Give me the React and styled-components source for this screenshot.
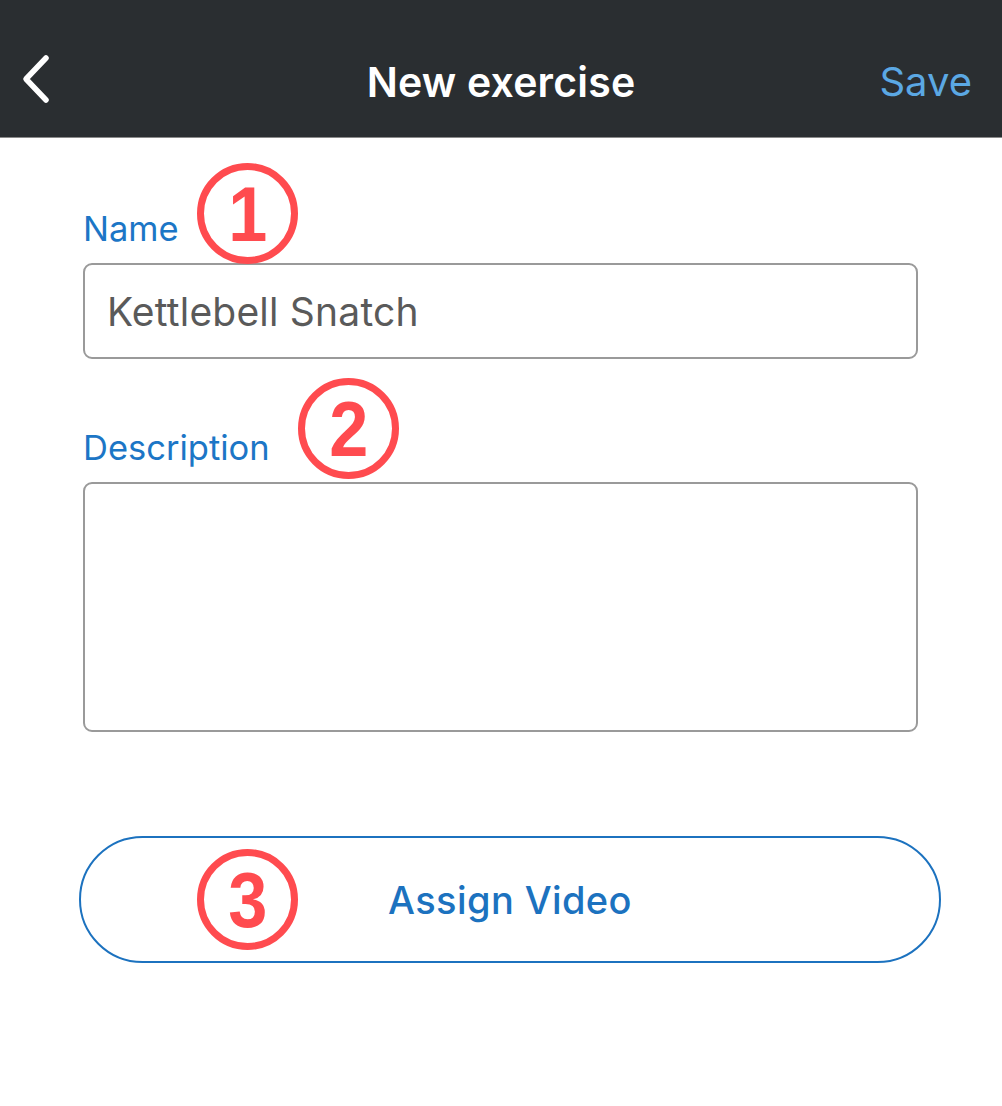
import React from 'react';
import styled, { createGlobalStyle } from 'styled-components';

const GlobalStyle = createGlobalStyle`
  html, body {
    margin: 0;
    padding: 0;
    background: #ffffff;
    font-family: 'Inter', 'Liberation Sans', Arial, sans-serif;
  }
`;

const Screen = styled.div`
  width: 1002px;
  height: 1106px;
  background: #ffffff;
  overflow: hidden;
`;

const NavBar = styled.header`
  height: 138px;
  background: #2a2e31;
  display: grid;
  grid-template-columns: 120px 1fr 120px;
  align-items: center;
  padding: 26px 30px 0 30px;
  box-sizing: border-box;
  border-bottom: 1px solid #8a8a8a;
`;

const BackButton = styled.button`
  background: none;
  border: 0;
  padding: 0;
  width: 34px;
  height: 50px;
  color: #ffffff;
  cursor: pointer;
  display: flex;
  align-items: center;
  margin: -6px 0 0 -10px;

  svg {
    width: 34px;
    height: 50px;
  }
`;

const Title = styled.h1`
  margin: 0;
  text-align: center;
  color: #ffffff;
  font-size: 41px;
  font-weight: 600;
  letter-spacing: 0.2px;
`;

const SaveButton = styled.button`
  background: none;
  border: 0;
  padding: 0;
  justify-self: end;
  color: #5ba8e4;
  font-family: inherit;
  font-size: 40px;
  font-weight: 400;
  cursor: pointer;
`;

const Form = styled.main`
  padding: 0 84px 0 83px;
  display: flex;
  flex-direction: column;
`;

const Field = styled.div`
  display: flex;
  flex-direction: column;
`;

const LabelRow = styled.div`
  position: relative;
  height: ${p => p.h}px;
  display: flex;
  align-items: flex-end;
`;

const Label = styled.label`
  color: #1c76c6;
  font-size: 34.5px;
  line-height: 1;
  padding-bottom: 17px;
`;

const Annotation = styled.span`
  position: absolute;
  left: ${p => p.x}px;
  top: ${p => p.y}px;
  width: 101px;
  height: 101px;
  box-sizing: border-box;
  border: 7px solid #ff4b4f;
  border-radius: 50%;
  display: flex;
  align-items: center;
  justify-content: center;
  color: #ff4b4f;
  font-family: 'Liberation Sans', Arial, sans-serif;
  font-weight: 700;
  font-size: 78px;
  line-height: 1;
  pointer-events: none;

  span {
    display: inline-block;
    transform: scaleX(0.9);
  }
`;

const Input = styled.div`
  height: 96px;
  box-sizing: border-box;
  border: 2px solid #9a9a9a;
  border-radius: 9px;
  display: flex;
  align-items: center;
  padding: 0 22px;
  color: #5a5a5a;
  font-size: 39px;
  letter-spacing: 0.2px;
`;

const TextArea = styled.div`
  height: 250px;
  box-sizing: border-box;
  border: 2px solid #9a9a9a;
  border-radius: 9px;
`;

const ButtonWrap = styled.div`
  position: relative;
  margin: 104px -23px 0 -4px;
`;

const PillButton = styled.button`
  width: 100%;
  height: 127px;
  box-sizing: border-box;
  border: 2px solid #1c72bf;
  border-radius: 64px;
  background: #ffffff;
  color: #1c72bf;
  font-family: inherit;
  font-size: 38px;
  font-weight: 500;
  letter-spacing: 0.4px;
  cursor: pointer;
`;

export default function App() {
  return (
    <Screen>
      <GlobalStyle />
      <NavBar>
        <BackButton aria-label="Back">
          <svg viewBox="0 0 34 50" fill="none">
            <path d="M26 4 L6 25 L26 46" stroke="currentColor" strokeWidth="5.5" strokeLinecap="round" strokeLinejoin="round" />
          </svg>
        </BackButton>
        <Title>New exercise</Title>
        <SaveButton>Save</SaveButton>
      </NavBar>
      <Form>
        <Field>
          <LabelRow h={125}>
            <Label>Name</Label>
            <Annotation x={114} y={25}><span>1</span></Annotation>
          </LabelRow>
          <Input>Kettlebell Snatch</Input>
        </Field>
        <Field>
          <LabelRow h={123}>
            <Label>Description</Label>
            <Annotation x={215} y={19}><span>2</span></Annotation>
          </LabelRow>
          <TextArea />
        </Field>
        <ButtonWrap>
          <PillButton>Assign Video</PillButton>
          <Annotation x={118} y={13}><span>3</span></Annotation>
        </ButtonWrap>
      </Form>
    </Screen>
  );
}
